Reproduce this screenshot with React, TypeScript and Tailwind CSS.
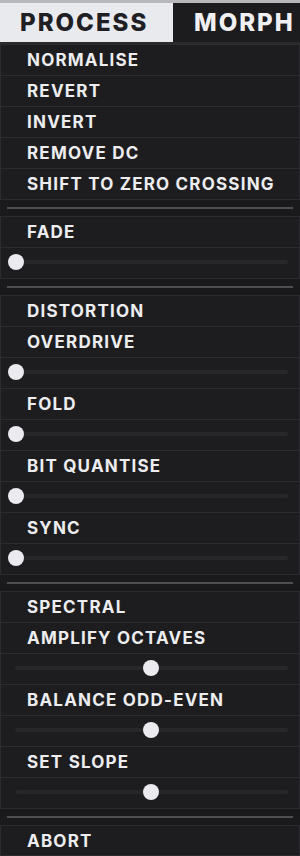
import React from 'react';

type Item =
    | { kind: 'label'; text: string }
    | { kind: 'slider'; value: number }
    | { kind: 'sep' };

const items: Item[] = [
    { kind: 'label', text: 'NORMALISE' },
    { kind: 'label', text: 'REVERT' },
    { kind: 'label', text: 'INVERT' },
    { kind: 'label', text: 'REMOVE DC' },
    { kind: 'label', text: 'SHIFT TO ZERO CROSSING' },
    { kind: 'sep' },
    { kind: 'label', text: 'FADE' },
    { kind: 'slider', value: 0 },
    { kind: 'sep' },
    { kind: 'label', text: 'DISTORTION' },
    { kind: 'label', text: 'OVERDRIVE' },
    { kind: 'slider', value: 0 },
    { kind: 'label', text: 'FOLD' },
    { kind: 'slider', value: 0 },
    { kind: 'label', text: 'BIT QUANTISE' },
    { kind: 'slider', value: 0 },
    { kind: 'label', text: 'SYNC' },
    { kind: 'slider', value: 0 },
    { kind: 'sep' },
    { kind: 'label', text: 'SPECTRAL' },
    { kind: 'label', text: 'AMPLIFY OCTAVES' },
    { kind: 'slider', value: 0.5 },
    { kind: 'label', text: 'BALANCE ODD-EVEN' },
    { kind: 'slider', value: 0.5 },
    { kind: 'label', text: 'SET SLOPE' },
    { kind: 'slider', value: 0.5 },
    { kind: 'sep' },
];

function Slider({ value }: { value: number }) {
    // knob centre runs from 15px to 150px at half
    const left = 7 + value * 270;
    return (
        <div className="relative h-[31px] border-t border-x border-[#2c2c30] bg-[#1d1d20]">
            <div className="absolute left-[14px] right-[11px] top-[12px] h-[4px] rounded-full bg-[#27272a]" />
            <div
                className="absolute top-[6px] h-[16px] w-[16px] rounded-full bg-[#ebebef]"
                style={{ left }}
            />
        </div>
    );
}

export default function App() {
    return (
        <div
            className="w-[300px] h-[856px] overflow-hidden bg-[#161618] flex flex-col"
            style={{ fontFamily: 'Inter, "Liberation Sans", sans-serif' }}
        >
            <div className="h-[3px] bg-[#b8b8bc]" />
            <div className="flex h-[41px] border-b-2 border-[#2a2a2d]">
                <div className="w-[173px] bg-[#e9eaee] flex items-center pl-[20px] pt-[1px] text-[24px] font-extrabold tracking-[2px] text-[#202024]">
                    PROCESS
                </div>
                <div className="flex-1 bg-[#1c1c1f] flex items-center pl-[21px] pt-[1px] text-[24px] font-extrabold tracking-[2px] text-[#f0f0f2] whitespace-nowrap">
                    MORPH
                </div>
            </div>
            {items.map((it, i) =>
                it.kind === 'label' ? (
                    <div key={i} className="h-[31px] flex items-center pl-[26px] pt-[2px] border-t border-x border-[#2c2c30] bg-[#1d1d20] text-[17px] font-bold tracking-[1.2px] text-[#ededf0] whitespace-nowrap">
                        {it.text}
                    </div>
                ) : it.kind === 'slider' ? (
                    <Slider key={i} value={it.value} />
                ) : (
                    <div key={i} className="h-[17px] flex items-center px-[7px] bg-[#1a1a1d] border-t border-[#2c2c30]">
                        <div className="h-[2px] w-full bg-[#4e4e51]" />
                    </div>
                )
            )}
            <div className="flex-1 flex items-center pl-[26px] pt-[2px] border border-[#2c2c30] bg-[#1d1d20] text-[17px] font-bold tracking-[1.2px] text-[#ededf0]">
                ABORT
            </div>
        </div>
    );
}
